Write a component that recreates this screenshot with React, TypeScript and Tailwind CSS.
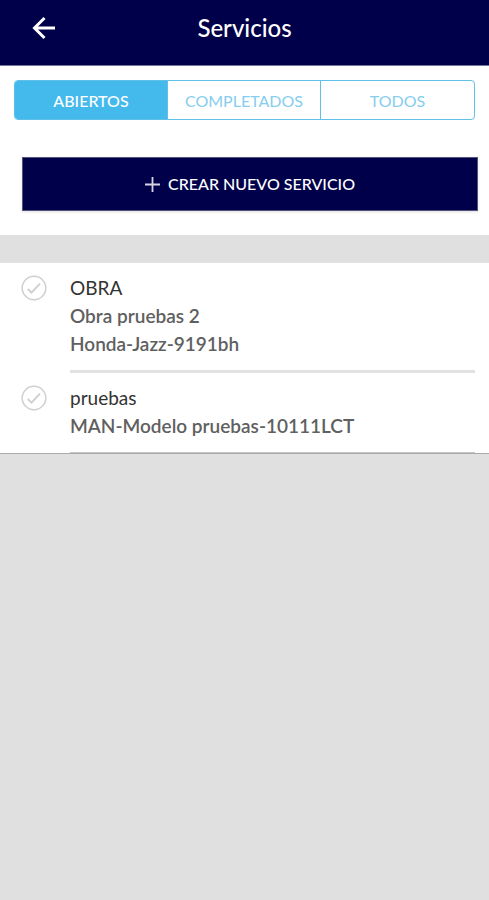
import React, { useState } from 'react'

const tabs = ['ABIERTOS', 'COMPLETADOS', 'TODOS']

const servicios = [
  { id: 1, titulo: 'OBRA', detalles: ['Obra pruebas 2', 'Honda-Jazz-9191bh'] },
  { id: 2, titulo: 'pruebas', detalles: ['MAN-Modelo pruebas-10111LCT'] },
]

function CheckIcon() {
  return (
    <svg width="26" height="26" viewBox="0 0 26 26" fill="none" stroke="#cfcfcf" aria-hidden="true">
      <circle cx="13" cy="13" r="11.8" strokeWidth="1.5" />
      <path d="M6.8 14l3.7 3.7 8.5-9" strokeWidth="1.9" />
    </svg>
  )
}

export default function App() {
  const [activo, setActivo] = useState('ABIERTOS')

  return (
    <div className="min-h-screen bg-[#e0e0e0] font-['Lato',sans-serif]">
      <header className="grid h-[66px] grid-cols-[1fr_auto_1fr] items-center border-b border-[#77779a] bg-[#00004a] px-8 pb-2.5 text-white">
        <button aria-label="Volver" className="justify-self-start">
          <svg width="24" height="24" viewBox="0 0 24 24" fill="none" stroke="currentColor" strokeWidth="3">
            <path d="M23 12H3M12.5 2L2.5 12l10 10" />
          </svg>
        </button>
        <h1 className="text-2xl font-medium">Servicios</h1>
      </header>

      <section className="bg-white pt-3.5 pb-6">
        <div className="mx-3.5 grid h-10 grid-cols-3 divide-x divide-[#5fc0ea] overflow-hidden rounded border border-[#5fc0ea]">
          {tabs.map((tab) => (
            <button
              key={tab}
              onClick={() => setActivo(tab)}
              className={`pt-0.5 text-base ${activo === tab ? 'bg-[#43b9ec] font-medium text-white' : 'text-[#86cdee]'}`}
            >
              {tab}
            </button>
          ))}
        </div>
        <div className="mt-[37px] mr-[11px] ml-[22px]">
          <button className="flex h-[54px] w-full items-center justify-center gap-2 border border-[#55557c] bg-[#00004a] text-base font-medium text-white shadow">
            <svg width="15" height="15" viewBox="0 0 15 15" stroke="#d5d5e0" strokeWidth="1.8" aria-hidden="true">
              <path d="M7.5 0v15M0 7.5h15" />
            </svg>
            CREAR NUEVO SERVICIO
          </button>
        </div>
      </section>

      <ul className="mt-7 border-b border-[#ababab] bg-white">
        {servicios.map((servicio) => (
          <li key={servicio.id} className="group flex gap-[23px] pr-3.5 pl-[21px]">
            <div className="pt-3">
              <CheckIcon />
            </div>
            <div className="flex-1 border-b-3 border-[#e2e2e2] pt-[11px] pb-3 text-[19px] leading-7 group-last:border-b group-last:border-[#c4c4c4]">
              <h2 className="text-[#333333]">{servicio.titulo}</h2>
              {servicio.detalles.map((detalle) => (
                <p key={detalle} className="font-semibold text-[#606060]">{detalle}</p>
              ))}
            </div>
          </li>
        ))}
      </ul>
    </div>
  )
}
